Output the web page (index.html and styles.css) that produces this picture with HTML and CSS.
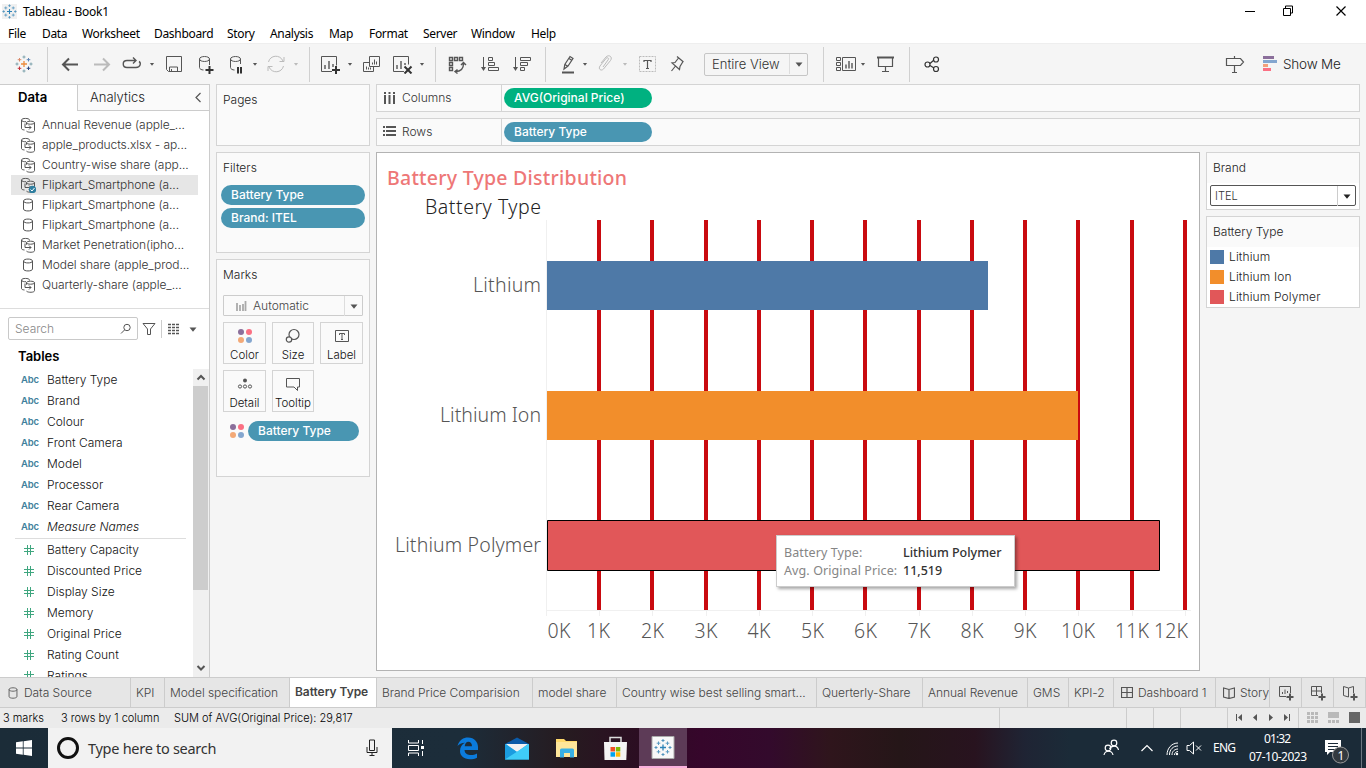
FILE: index.html
```html
<!DOCTYPE html>
<html lang="en">
<head>
<meta charset="utf-8">
<title>Tableau - Book1</title>
<link rel="stylesheet" href="styles.css">
</head>
<body>
<svg class="defs" width="0" height="0">
  <symbol id="caret" viewBox="0 0 8 20"><path d="M.5 8.500h7L4 12.800z" fill="currentColor"/></symbol>
  <symbol id="db" viewBox="0 0 16 16"><path d="M3.500 4v8c0 2.600 9 2.600 9 0V4M3.500 4c0-2.600 9-2.600 9 0s-9 2.600-9 0z" class="ln"/></symbol>
  <symbol id="dbs" viewBox="0 0 16 16"><path d="M9.500 3.500V3C9.500.9 1.500.9 1.500 3v8.500c0 .8 1 1.300 3 1.500M1.500 3c0 1.500 3 1.900 4.500 1.700M14.500 5.700v8c0 2-6.500 2-8 .5M6.500 5.700c0-2 8-2 8 0s-8 2-8 0zM5 6.500v4h6M6.500 5.700v2M9 8.500l2 2-2 2" class="ln"/></symbol>
  <symbol id="dots" viewBox="0 0 16 16"><circle cx="4" cy="4" r="3" fill="#8b6f9b"/><circle cx="12" cy="4" r="3" fill="#fb7083"/><circle cx="4" cy="12" r="3" fill="#f3a977"/><circle cx="12" cy="12" r="3" fill="#84a6cf"/></symbol>
  <symbol id="logo" viewBox="0 0 18 18"><path d="M9 6v6M6 9h6" stroke="var(--a,#2d83b7)" stroke-width="1.300"/><path d="M9 .5v3M7.500 2h3M9 14.500v3M7.500 16h3M.5 9h3M2 7.500v3M14.500 9h3M16 7.500v3" stroke="var(--b,#4f93bd)" stroke-width="1"/><path d="M4.500 3v3.500M2.700 4.700h3.600" stroke="var(--c,#5b9ac2)"/><path d="M13.500 3v3.500M11.700 4.700h3.600" stroke="var(--f,#5b9ac2)"/><path d="M4.500 11.500V15M2.700 13.300h3.600" stroke="var(--d,#5b9ac2)"/><path d="M13.500 11.500V15M11.700 13.300h3.600" stroke="var(--e,#5b9ac2)"/></symbol>
</svg>

<header class="titlebar">
  <svg class="applogo" viewBox="0 0 18 18"><use href="#logo"/></svg>
  <span class="apptitle">Tableau - Book1</span>
  <svg class="winbtns" viewBox="0 0 110 20"><path d="M2 10.500h10M49.500 8.500M47.500 7.500v7h-7v-7zM42.500 7v-2h7v7h-2" fill="none" stroke="#000"/><path d="M93.500 5.500l9 9M102.500 5.500l-9 9" stroke="#000" stroke-width="1.200"/></svg>
</header>

<nav class="menu"><span>File</span><span>Data</span><span>Worksheet</span><span>Dashboard</span><span>Story</span><span>Analysis</span><span>Map</span><span>Format</span><span>Server</span><span>Window</span><span>Help</span></nav>

<div class="toolbar">
  <svg class="ic tlogo" viewBox="0 0 20 20"><use href="#logo" x="1" y="1" width="18" height="18"/></svg>
  <i class="sep"></i>
  <svg class="ic" viewBox="0 0 20 20"><path d="M18 10.500H3M9 4.500l-6 6 6 6" class="ln w2"/></svg>
  <svg class="ic dim" viewBox="0 0 20 20"><path d="M2 10.500h15M11 4.500l6 6-6 6" class="ln w2"/></svg>
  <svg class="ic" viewBox="0 0 20 20"><path d="M14 6.500H5c-5 0-5 7 0 7h9c5 0 5-5 3-6M11 3.500l3 3-3 3" class="ln w15"/></svg>
  <svg class="ct"><use href="#caret"/></svg>
  <svg class="ic" viewBox="0 0 20 20"><path d="M2.500 2.500h15v15h-13l-2-2zM5.500 17v-4h8v4M7.500 17v-2" class="ln"/></svg>
  <svg class="ic" viewBox="0 0 20 20"><path d="M3.500 5v8.500c0 1.500 2 2.500 4 2.500M13.500 5v6M3.500 5c0-3.300 10-3.300 10 0s-10 3.300-10 0z" class="ln"/><path d="M13.500 12v8M9.500 16h8" class="ln dk w2"/></svg>
  <svg class="ic" viewBox="0 0 20 20"><path d="M3.500 5v8.500c0 1.500 2 2.500 4 2.500M13.500 5v5M3.500 5c0-3.300 10-3.300 10 0s-10 3.300-10 0z" class="ln"/><path d="M11 13v6.500M14 13v6.500" class="ln dk w2"/></svg>
  <svg class="ct"><use href="#caret"/></svg>
  <svg class="ic dim" viewBox="0 0 20 20"><path d="M2.500 8C4 1 14 0 17 7M17.500 12C16 19 6 20 3 13M18 3v4.500h-4.500M2 17v-4.500h4.500" class="ln"/></svg>
  <svg class="ct dim"><use href="#caret"/></svg>
  <i class="sep"></i>
  <svg class="ic" viewBox="0 0 20 20"><path d="M11 17.500H.5v-15h15v9" class="ln"/><path d="M4 15v-4M8 15V7M12 13v-3" class="ln w15"/><path d="M15 12v8M11 16h8" class="ln dk w2"/></svg>
  <svg class="ct"><use href="#caret"/></svg>
  <svg class="ic" viewBox="0 0 20 20"><path d="M8.500 2.500h10v10h-10zM8.500 8.500h-6v9h10v-5M11.500 10.500v-2M13.500 10.500v-5M15.500 10.500v-3M5.500 15.500v-3M7.500 15.500v-2M9.500 15.500v-2" class="ln"/></svg>
  <svg class="ic" viewBox="0 0 20 20"><path d="M11 17.500H.5v-15h15v8" class="ln"/><path d="M4 15v-4M8 15V7M12 11V9" class="ln w15"/><path d="M11.500 12.500l7 7M18.500 12.500l-7 7" class="ln dk w2"/></svg>
  <svg class="ct"><use href="#caret"/></svg>
  <i class="sep"></i>
  <svg class="ic" viewBox="0 0 20 20"><path d="M2.500 3.500h3v3h-3zM7.500 3.500h3v3h-3zM12.500 3.500h3v3h-3zM2.500 8.500h3v3h-3zM2.500 13.500h3v3h-3zM16.500 9.500c0 5-3 8-8 8M14 11l2.500-2.500L19 11M10.500 15.500l-2.500 2 2.500 2" class="ln w15"/></svg>
  <svg class="ic" viewBox="0 0 20 20"><path d="M3.500 3v13M8.500 3.500h4v3h-4zM8.500 8.500h6v3h-6zM8.500 13.500h10v3h-10z" class="ln"/><path d="M1 13h5l-2.500 4z" fill="currentColor"/></svg>
  <svg class="ic" viewBox="0 0 20 20"><path d="M3.500 3v13M8.500 3.500h10v3h-10zM8.500 8.500h7v3h-7zM8.500 13.500h4v3h-4z" class="ln"/><path d="M1 13h5l-2.500 4z" fill="currentColor"/></svg>
  <i class="sep"></i>
  <svg class="ic" viewBox="0 0 20 20"><path d="M6 15l.8-4.500L12 2.500l3 2-5 7.500zM7 10.500l3 2M11 4.500l3 2" class="ln w12"/><path d="M4 18.500h12" class="ln w2"/></svg>
  <svg class="ct"><use href="#caret"/></svg>
  <svg class="ic dim" viewBox="0 0 20 20"><path d="M8 13l5-7c1.500-2-.5-3-2-1.500L5 12c-2 3 1 5.500 3.500 3l7-8.500c2.500-3.500-1.500-6.500-4.500-3.500L6 9" class="ln"/></svg>
  <svg class="ct dim"><use href="#caret"/></svg>
  <svg class="ic" viewBox="0 0 20 20"><path d="M1.500 2.500h16v15h-16z" class="ln dim" stroke-dasharray="2 1"/><path d="M6 8V6.500h7V8M9.500 6.500v8M8 14.500h3" class="ln w12"/></svg>
  <svg class="ic" viewBox="0 0 20 20"><path d="M10 2.500l6.500 5.500M11.500 4L8 8.500l-3 .5 7.500 6.500.5-3 3-5M8.500 12l-4 5" class="ln w12"/></svg>
  <div class="viewsel"><span>Entire View</span><svg class="ct"><use href="#caret"/></svg></div>
  <i class="sep"></i>
  <svg class="ic" viewBox="0 0 20 20"><path d="M.5 3.500h4v3h-4zM.5 8.500h4v3h-4zM.5 13.500h4v3h-4zM6.500 3.500h13v13h-13z" class="ln"/><path d="M10 14.500v-4M13 14.500V7M16 14.500V9" class="ln w15"/></svg>
  <svg class="ct"><use href="#caret"/></svg>
  <svg class="ic" viewBox="0 0 20 20"><path d="M1 3.500h17" class="ln w2"/><path d="M2.500 4v8.500h14V4M9.500 12.500v5M6 17.500h7" class="ln w12"/></svg>
  <i class="sep"></i>
  <svg class="ic dk" viewBox="0 0 20 20"><path d="M8 9.500l4-3.500M8 11.500l4 2.500" class="ln w12"/><circle cx="5.500" cy="10.500" r="2.500" class="ln w12"/><circle cx="14" cy="5.500" r="2.500" class="ln w12"/><circle cx="14" cy="15" r="2.500" class="ln w12"/></svg>
  <svg class="ic" viewBox="0 0 20 20"><path d="M1.500 4.500h14l3 3.500-3 3.500h-14zM9.500 4.500V2M9.500 11.500v7M7 18.500h5" class="ln w12"/></svg>
  <div class="showme"><svg viewBox="0 0 14 16"><path d="M0 0h11v3H0z" fill="#8b6f9b"/><path d="M0 4h14v3H0z" fill="#84a6cf"/><path d="M0 8h5v3H0z" fill="#f3a07a"/><path d="M0 12h8v3H0z" fill="#fb7083"/></svg><span>Show Me</span></div>
</div>

<main class="work">
  <aside class="data">
    <div class="dtabs"><b>Data</b><div><span>Analytics</span><svg viewBox="0 0 8 12"><path d="M5.500 1L1 5.500 5.500 10" class="ln w12"/></svg></div></div>
    <ul class="sources">
      <li><svg><use href="#dbs"/></svg>Annual Revenue (apple_...</li>
      <li><svg><use href="#dbs"/></svg>apple_products.xlsx - ap...</li>
      <li><svg><use href="#dbs"/></svg>Country-wise share (app...</li>
      <li class="on"><svg viewBox="0 0 16 16"><use href="#dbs"/><circle cx="12.500" cy="12.500" r="3.700" fill="#2f7fa0"/><path d="M10.500 12.500l1.500 1.500 2.500-3" stroke="#fff" fill="none"/></svg>Flipkart_Smartphone (a...</li>
      <li><svg><use href="#db"/></svg>Flipkart_Smartphone (a...</li>
      <li><svg><use href="#db"/></svg>Flipkart_Smartphone (a...</li>
      <li><svg><use href="#dbs"/></svg>Market Penetration(ipho...</li>
      <li><svg><use href="#db"/></svg>Model share (apple_prod...</li>
      <li><svg><use href="#dbs"/></svg>Quarterly-share (apple_...</li>
    </ul>
    <div class="searchrow">
      <div class="search"><span>Search</span><svg viewBox="0 0 12 12"><circle cx="7" cy="4.500" r="3.200" class="ln"/><path d="M4.500 7L1 10.500" class="ln"/></svg></div>
      <svg class="funnel" viewBox="0 0 14 14"><path d="M1 1.500h12L8.500 7v5.500h-3V7z" class="ln"/></svg>
      <i></i>
      <svg class="lst" viewBox="0 0 14 12"><path d="M0 1.500h12M0 4.500h12M0 7.500h12M0 10.500h12" class="ln w15" stroke-dasharray="3 1"/></svg>
      <svg class="ct big"><use href="#caret"/></svg>
    </div>
    <h2>Tables</h2>
    <div class="fields">
      <div class="flist">
        <div class="f"><em>Abc</em>Battery Type</div>
        <div class="f"><em>Abc</em>Brand</div>
        <div class="f"><em>Abc</em>Colour</div>
        <div class="f"><em>Abc</em>Front Camera</div>
        <div class="f"><em>Abc</em>Model</div>
        <div class="f"><em>Abc</em>Processor</div>
        <div class="f"><em>Abc</em>Rear Camera</div>
        <div class="f it"><em>Abc</em>Measure Names</div>
        <hr>
        <div class="f n"><svg viewBox="0 0 10 10"><path d="M0 3.500h10M0 6.500h10M3.500 0v10M6.500 0v10"/></svg>Battery Capacity</div>
        <div class="f n"><svg viewBox="0 0 10 10"><path d="M0 3.500h10M0 6.500h10M3.500 0v10M6.500 0v10"/></svg>Discounted Price</div>
        <div class="f n"><svg viewBox="0 0 10 10"><path d="M0 3.500h10M0 6.500h10M3.500 0v10M6.500 0v10"/></svg>Display Size</div>
        <div class="f n"><svg viewBox="0 0 10 10"><path d="M0 3.500h10M0 6.500h10M3.500 0v10M6.500 0v10"/></svg>Memory</div>
        <div class="f n"><svg viewBox="0 0 10 10"><path d="M0 3.500h10M0 6.500h10M3.500 0v10M6.500 0v10"/></svg>Original Price</div>
        <div class="f n"><svg viewBox="0 0 10 10"><path d="M0 3.500h10M0 6.500h10M3.500 0v10M6.500 0v10"/></svg>Rating Count</div>
        <div class="f n"><svg viewBox="0 0 10 10"><path d="M0 3.500h10M0 6.500h10M3.500 0v10M6.500 0v10"/></svg>Ratings</div>
      </div>
      <div class="scroll">
        <svg viewBox="0 0 16 17"><path d="M4.500 10.500L8 7l3.500 3.500" class="ln w2"/></svg>
        <div class="thumb"></div>
        <svg viewBox="0 0 16 17"><path d="M4.500 7L8 10.500 11.500 7" class="ln w2"/></svg>
      </div>
    </div>
  </aside>

  <section class="cards">
    <div class="card pages"><h3>Pages</h3></div>
    <div class="card filters"><h3>Filters</h3><div class="pill">Battery Type</div><div class="pill">Brand: ITEL</div></div>
    <div class="card marks">
      <h3>Marks</h3>
      <div class="auto"><svg viewBox="0 0 12 12"><path d="M2 3v8M5 5v6M8 4v7M10.500 1v10" stroke="#aaa" stroke-width="1.800"/></svg><span>Automatic</span><svg class="ct"><use href="#caret"/></svg></div>
      <div class="mgrid">
        <div><svg viewBox="0 0 16 16"><use href="#dots"/></svg>Color</div>
        <div><svg viewBox="0 0 16 16"><circle cx="9" cy="6.500" r="5" class="ln w12"/><circle cx="4" cy="11.500" r="2.700" class="ln w12 bgf"/></svg>Size</div>
        <div><svg viewBox="0 0 16 16"><path d="M1.500 2.500h13v11h-13zM5.500 7V5.500h5V7M8 5.500v5.500M7 11.500h2" class="ln"/></svg>Label</div>
        <div><svg viewBox="0 0 16 16"><circle cx="8" cy="4.500" r="2" fill="#555"/><circle cx="3" cy="10.500" r="1.600" class="ln"/><circle cx="8" cy="10.500" r="1.600" class="ln"/><circle cx="13" cy="10.500" r="1.600" class="ln"/></svg>Detail</div>
        <div><svg viewBox="0 0 16 16"><path d="M1.500 2.500h13v8.500h-2v3.500L9 11H1.500z" class="ln"/></svg>Tooltip</div>
      </div>
      <div class="mpill"><svg><use href="#dots"/></svg><div class="pill">Battery Type</div></div>
    </div>
  </section>

  <section class="center">
    <div class="shelf"><div class="lab"><svg viewBox="0 0 13 12"><path d="M2 0v2M2 3v9M6.500 0v2M6.500 3v9M11 0v2M11 3v9" stroke="#555" stroke-width="2"/></svg>Columns</div><div class="pill green">AVG(Original Price)</div></div>
    <div class="shelf"><div class="lab"><svg viewBox="0 0 13 12"><path d="M0 1h2M3 1h10M0 5h2M3 5h10M0 9h2M3 9h10" stroke="#555" stroke-width="2"/></svg>Rows</div><div class="pill">Battery Type</div></div>
    <div class="lower">
      <div class="viz">
        <svg class="chart" viewBox="377 153 822 517">
          <text x="387" y="185" class="vt" textLength="240">Battery Type Distribution</text>
          <text x="425" y="214" class="vh" textLength="116">Battery Type</text>
          <path d="M599 220v390M652 220v390M706 220v390M759 220v390M812 220v390M865 220v390M919 220v390M972 220v390M1025 220v390M1078 220v390M1132 220v390M1185 220v390" stroke="#c90a10" stroke-width="4"/>
          <path d="M546.500 220v396M546 610.500h645M599.500 611v5M652.500 611v5M706.500 611v5M759.500 611v5M812.500 611v5M865.500 611v5M919.500 611v5M972.500 611v5M1025.500 611v5M1078.500 611v5M1132.500 611v5M1185.500 611v5" stroke="#f0f0f0"/>
          <path d="M547 261h441v49H547z" fill="#4e79a7"/>
          <path d="M547 391h531v49H547z" fill="#f28e2b"/>
          <path d="M547.500 520.500h612v50h-612z" fill="#e15759" stroke="#000"/>
          <g class="vl">
            <text x="473" y="292" textLength="68">Lithium</text>
            <text x="440" y="422" textLength="101">Lithium Ion</text>
            <text x="395" y="552" textLength="146">Lithium Polymer</text>
            <text x="547.500" y="638" textLength="23">0K</text>
            <text x="587" y="638" textLength="23">1K</text>
            <text x="641" y="638" textLength="23">2K</text>
            <text x="694.500" y="638" textLength="23">3K</text>
            <text x="747.500" y="638" textLength="23">4K</text>
            <text x="801" y="638" textLength="23">5K</text>
            <text x="854" y="638" textLength="23">6K</text>
            <text x="907.500" y="638" textLength="23">7K</text>
            <text x="960.500" y="638" textLength="23">8K</text>
            <text x="1013.500" y="638" textLength="23">9K</text>
            <text x="1061" y="638" textLength="34">10K</text>
            <text x="1115" y="638" textLength="34">11K</text>
            <text x="1154" y="638" textLength="34">12K</text>
          </g>
        </svg>
        <div class="tip"><span>Battery Type:</span><b>Lithium Polymer</b><span>Avg. Original Price:</span><b>11,519</b></div>
      </div>
      <div class="right">
        <div class="card"><h3>Brand</h3><div class="body"><div class="bsel"><span>ITEL</span><svg class="ct"><use href="#caret"/></svg></div></div></div>
        <div class="card"><h3>Battery Type</h3><div class="body leg"><p><i class="c1"></i>Lithium</p><p><i class="c2"></i>Lithium Ion</p><p><i class="c3"></i>Lithium Polymer</p></div></div>
      </div>
    </div>
  </section>
</main>

<div class="tabs">
  <span class="ds"><svg viewBox="0 0 16 16"><use href="#db"/></svg>Data Source</span><span>KPI</span><span>Model specification</span><span class="act">Battery Type</span><span>Brand Price Comparision</span><span>model share</span><span>Country wise best selling smart...</span><span>Querterly-Share</span><span>Annual Revenue</span><span>GMS</span><span>KPI-2</span>
  <span class="wi"><svg viewBox="0 0 12 12"><path d="M.5 .5h11v10H.5zM.5 5.500h11M6 .5v10" class="ln w12"/></svg>Dashboard 1</span>
  <span class="wi"><svg viewBox="0 0 12 12"><path d="M6 2.500L.5 1v9L6 11.500 11.500 10V1zM6 2.500v9" class="ln w12"/></svg>Story</span>
  <span class="nb"><svg viewBox="0 0 16 16"><path d="M8 11.500H1.500v-10h11V8M4.500 9V7M7 9V4.500M9.500 8V6" class="ln"/><path d="M12 8.500v7M8.500 12h7" class="ln w2"/></svg></span>
  <span class="nb"><svg viewBox="0 0 16 16"><path d="M8 10.500H1.500v-9h10V8M1.500 6h10M6.500 1.500v9" class="ln"/><path d="M12 8.500v7M8.500 12h7" class="ln w2"/></svg></span>
  <span class="nb"><svg viewBox="0 0 16 16"><path d="M6.500 3L1.500 1.500v9l5 1.500M6.500 3l5-1.500V8M6.500 3v9" class="ln"/><path d="M12 8.500v7M8.500 12h7" class="ln w2"/></svg></span>
</div>

<div class="status">
  <span>3 marks</span><span>3 rows by 1 column</span><span>SUM of AVG(Original Price): 29,817</span>
  <i></i><i></i><i></i><i></i>
  <div class="navs"><svg viewBox="0 0 70 20"><path d="M8.500 6v7M61.500 6v7" stroke="#555"/><path d="M14 6v7l-4-3.500zM29 6v7l-4-3.500zM41 6v7l4-3.500zM56 6v7l4-3.500z" fill="#555"/></svg></div>
  <div class="views"><svg viewBox="0 0 68 20"><path d="M8 5.500h11M8 9.500h11M8 13.500h11" stroke="#b9b9b9" stroke-width="3" stroke-dasharray="3 1"/><path d="M29 4h11v6H29z" fill="#b9b9b9"/><path d="M29 13.500h11" stroke="#b9b9b9" stroke-width="3" stroke-dasharray="3 1"/><path d="M50 4h11v11H50z" fill="#666"/></svg></div>
</div>

<footer class="taskbar">
  <div class="start"><svg viewBox="0 0 16 16"><path d="M0 2.300L6.800 1.300V7.600H0zM7.600 1.200L16 0v7.600H7.600zM0 8.400h6.800v6.300L0 13.700zM7.600 8.400H16V16l-8.400-1.200z" fill="#fff"/></svg></div>
  <div class="tsearch"><i></i><span>Type here to search</span><svg viewBox="0 0 12 18"><path d="M3.500 1h5v10.500h-5zM1 8v5.500h10V8M6 13.500V17M3.500 16.500h5" fill="none" stroke="#222"/></svg></div>
  <div class="app tv"><svg viewBox="0 0 24 24"><path d="M4.500 4v3h10V4M4.500 20v-3h10v3M4.500 9.500h10v5h-10zM18.500 4v4M18.500 15v5" fill="none" stroke="#fff"/><path d="M17 10h3v3h-3z" fill="#fff"/></svg></div>
  <div class="app"><svg viewBox="0 0 24 24"><path d="M1.500 10C3 4 7.500 1.500 12 1.500c6.500 0 10 4.800 10 9.500v3H8.500c.2 4 3.500 5 6.500 5 2.200 0 4-.5 6-1.600v4.300c-2 1-4.300 1.500-7 1.500C7.500 23.200 4 19.500 4 15c0-4 2-6.800 5-8.200C5.500 7 3 8 1.500 10zm7.200.2H16c0-3-1.500-4.500-3.600-4.500S9 7.500 8.700 10.200z" fill="#0b7bdc"/></svg></div>
  <div class="app"><svg viewBox="0 0 24 24"><path d="M0 8l12-6.500L24 8v3H0z" fill="#0b5ba8"/><path d="M0 8h24v15.500H0z" fill="#23aee8"/><path d="M1 8h22L12 16z" fill="#f2f2f2"/><path d="M0 8l12 8L0 23.500z" fill="#1b9cdf"/><path d="M24 8v15.500H0L24 8z" fill="#3fccf7"/></svg></div>
  <div class="app"><svg viewBox="0 0 24 24"><path d="M2 3h8l2 2h11v16H2z" fill="#ffd96b"/><path d="M2 6h21v15H2z" fill="#fee69a"/><path d="M6 21.500V14q0-1.500 1.500-1.500h11Q20 12.500 20 14v7.500h-4V17h-6v4.500z" fill="#38b0e4"/></svg></div>
  <div class="app"><svg viewBox="0 0 24 24"><path d="M7 6V1.500h11V6" fill="none" stroke="#ddd" stroke-width="1.500"/><path d="M1 6h23l-.7 18H1.500z" fill="#f4f4f4"/><path d="M7.500 11h4.500v4.500H7.500z" fill="#f04e24"/><path d="M12.800 11h4.500v4.500h-4.500z" fill="#7fba00"/><path d="M7.500 16.200h4.500v4.500H7.500z" fill="#00a3ee"/><path d="M12.800 16.200h4.500v4.500h-4.500z" fill="#ffb900"/></svg></div>
  <div class="app cur"><svg viewBox="0 0 24 24"><path d="M1 1.500h22v22H1z" fill="#f8f8f8" stroke="#aaa"/><use href="#logo" x="3" y="3.500" width="18" height="18"/></svg></div>
  <div class="tray">
    <svg class="tri" viewBox="0 0 266 40"><g fill="none" stroke="#fff"><g stroke-width="1.200"><circle cx="14" cy="15" r="2.800"/><path d="M9.500 21c2-4 8-4 9 1"/><circle cx="8" cy="20" r="2.800"/><path d="M4 27c1-5 8-5 9 0M41.500 23l5.500-5.500L52.500 23"/></g><path d="M67 27c0-7 5-12 11-12M69.500 27c0-6 4-9 8.500-9M72 27c0-4 3-6 6-6M74.500 27c0-2 1.500-3.500 3.500-3.500M87 17.500h2.500l4-3.500v12l-4-3.500H87zM96 17.500l5 5M101 17.500l-5 5"/></g><circle cx="77" cy="26" r="1.200" fill="#fff"/><path d="M225 12h16v12h-11l-3 3v-3h-2z" fill="#fff"/><path d="M228 15.500h10M228 18.500h10M228 21.500h7" stroke="#1b2a38"/><circle cx="240.500" cy="27" r="8" fill="#333a40" stroke="#999"/><path d="M261.500 0v40" stroke="#6b7680"/><text x="113" y="24" textLength="23">ENG</text><text x="164" y="15" textLength="27">01:32</text><text x="149" y="33" textLength="58">07-10-2023</text><text x="237.500" y="31.500">1</text></svg>
  </div>
</footer>
</body>
</html>
```
FILE: styles.css
```css
* { box-sizing: border-box; margin: 0; padding: 0; }
body { width: 1366px; height: 768px; overflow: hidden; background: #f5f5f5; color: #333; font: 300 12px/20px Inter, "Noto Sans", sans-serif; white-space: nowrap; display: flex; flex-direction: column; }
svg { display: block; color: #555; flex: none; }
.defs { position: absolute; }
.ln { fill: none; stroke: currentColor; stroke-width: 1; }
.w12 { stroke-width: 1.200; }
.w15 { stroke-width: 1.400; }
.w2 { stroke-width: 2; }
.dk { color: #333; }
.dim { color: #bbb; }
.bgf { fill: #fafafa; }
.ct { width: 8px; height: 20px; }

.titlebar { height: 24px; background: #fff; display: flex; align-items: center; padding: 0 13px 2px 2px; font: 400 12px "Noto Sans", sans-serif; color: #000; }
.applogo { width: 15px; height: 15px; background: #f0f0f0; }
.apptitle { margin-left: 6px; letter-spacing: -.25px; flex: 1; }
.winbtns { width: 110px; height: 20px; }
.menu { height: 19px; background: #fff; display: grid; grid-template-columns: 34px 40px 72px 73px 43px 59px 40px 54px 48px 60px auto; padding-left: 8px; font: 400 12px/20px "Noto Sans", sans-serif; letter-spacing: -.32px; color: #000; }

.toolbar { height: 41px; border-top: 1px solid #eee; display: grid; align-items: center; padding-left: 14px; grid-template-columns: 33px 13px 32px 30px 27px 15px 32px 31px 25px 14px 27px 16px 12px 26px 14px 32px 26px 16px 12px 33px 32px 33px 13px 24px 13px 27px 16px 29px 37px 119px 13px 24px 16px 33px 13px 303px 38px auto; }
.ic { width: 20px; height: 20px; }
.toolbar .ct { height: 12px; width: 6px; }
.sep { width: 1px; height: 35px; background: #d0d0d0; }
.tlogo { --a: #eb8a3c; --b: #7fa3ad; --c: #d98a6b; --d: #c3343c; --e: #28447f; --f: #5f86b5; }
.viewsel { width: 104px; height: 23px; border: 1px solid #c6c6c6; border-radius: 2px; display: flex; font-size: 13px; align-items: center; padding-left: 7px; color: #333; }
.viewsel span { width: 78px; letter-spacing: 0; border-right: 1px solid #ddd; }
.toolbar .viewsel .ct { margin-left: 5px; width: 8px; height: 20px; }
.showme { display: flex; align-items: center; gap: 6px; font-size: 13.500px; font-weight: 350; letter-spacing: -.2px; color: #222; }
.showme svg { width: 14px; height: 16px; }

.work { height: 593px; display: flex; }
.data { width: 210px; background: #fff; border-right: 1px solid #ccc; border-top: 1px solid #ccc; display: flex; flex-direction: column; }
.dtabs { height: 26px; display: grid; grid-template-columns: 77px auto; font-size: 13px; line-height: 25px; color: #222; }
.dtabs b { font-size: 13.200px; color: #000; padding-left: 18px; font-weight: 600; }
.dtabs div { background: #fafafa; border-left: 1px solid #ccc; border-bottom: 1px solid #ccc; display: flex; justify-content: space-between; align-items: center; padding: 0 6px 0 12px; }
.dtabs svg { width: 8px; height: 12px; }
.sources { list-style: none; padding: 4px 11px 0; height: 198px; border-bottom: 1px solid #ddd; color: #333; letter-spacing: -.07px; }
.sources li { height: 20px; display: flex; align-items: center; gap: 6px; padding-left: 9px; }
.sources .on { background: #e6e6e6; }
.sources svg { width: 16px; height: 16px; }
.searchrow { height: 38px; display: flex; align-items: center; padding: 1px 0 0 8px; }
.search { width: 130px; height: 23px; border: 1px solid #c9c9c9; border-radius: 2px; color: #888; display: flex; align-items: center; justify-content: space-between; padding: 0 5px 0 6px; }
.search svg { width: 12px; height: 12px; }
.funnel { width: 14px; height: 14px; margin-left: 4px; }
.searchrow i { width: 1px; height: 18px; background: #ccc; margin: 0 6px 0 5px; }
.lst { width: 14px; height: 12px; }
.searchrow .big { margin-left: 7px; }
h2 { font-size: 13px; font-weight: 600; color: #000; padding-left: 18px; height: 22px; line-height: 19px; }
.fields { display: flex; flex: 1; min-height: 0; overflow: hidden; color: #111; }
.flist { flex: 1; }
.f { height: 21px; line-height: 20px; display: flex; align-items: center; }
.f em { font: 600 9.500px/20px Inter, sans-serif; color: #3f7f9c; width: 26px; margin-left: 21px; padding-top: 1px; letter-spacing: -.2px; }
.it { font-style: italic; }
.f svg { width: 10px; height: 10px; margin: 0 13px 0 24px; stroke: #3fa67f; }
hr { border: 0; height: 1px; background: #ddd; margin: 1px 7px 0 15px; }
.scroll { width: 16px; background: #f0f0f0; display: flex; flex-direction: column; }
.scroll svg { width: 16px; height: 17px; }
.thumb { height: 204px; width: 15px; background: #cdcdcd; margin-bottom: 69px; }

.cards { width: 154px; margin-left: 6px; display: flex; flex-direction: column; gap: 6px; }
.card { background: #fafafa; border: 1px solid #d4d4d4; }
h3 { font-size: 12px; font-weight: 300; color: #222; padding: 5px 0 0 6px; height: 30px; }
.pages { height: 62px; }
.filters { height: 101px; padding-left: 4px; }
.filters h3 { padding-left: 2px; height: 32px; }
.pill { height: 20px; border-radius: 10px; background: #4996b2; color: #fff; font-weight: 500; padding-left: 10px; line-height: 20px; }
.filters .pill { width: 144px; margin-bottom: 3px; }
.marks { height: 218px; padding: 0 6px; }
.marks h3 { padding-left: 0; height: 35px; }
.auto { height: 21px; border: 1px solid #ccc; border-radius: 1px; display: flex; align-items: center; color: #444; padding-left: 11px; }
.auto svg:first-child { width: 12px; height: 12px; }
.auto span { margin-left: 6px; width: 92px; border-right: 1px solid #ddd; }
.auto .ct { margin-left: 5px; }
.mgrid { display: grid; grid-template-columns: 43px 42px 43px; column-gap: 6px; row-gap: 6px; margin-top: 6px; }
.mgrid div { height: 42px; border: 1px solid #d4d4d4; display: flex; flex-direction: column; align-items: center; font-size: 11.500px; line-height: 18px; padding-top: 5px; color: #111; }
.mgrid svg { width: 16px; height: 16px; margin-bottom: 2px; }
.mpill { display: flex; align-items: center; gap: 3px; margin: 9px 0 0 6px; }
.mpill svg { width: 16px; height: 16px; }
.mpill .pill { width: 111px; }

.center { width: 984px; margin-left: 6px; display: flex; flex-direction: column; gap: 6px; }
.shelf { height: 28px; background: #fafafa; border: 1px solid #d4d4d4; display: flex; align-items: center; }
.lab { width: 125px; height: 26px; border-right: 1px solid #d4d4d4; display: flex; align-items: center; gap: 6px; padding-left: 6px; color: #333; }
.lab svg { width: 13px; height: 12px; }
.shelf .pill { width: 148px; margin-left: 2px; }
.green { background: #00b180; }
.lower { display: flex; gap: 6px; height: 519px; }
.viz { width: 824px; background: #fff; border: 1px solid #b3b3b3; position: relative; }
.chart { width: 822px; height: 517px; font-family: "Noto Sans", sans-serif; }
.vt { font-size: 19.500px; font-weight: 500; fill: #ee7777; }
.vh { font-size: 19.500px; fill: #222; font-weight: 300; }
.vl { font-size: 19.500px; fill: #555; font-weight: 300; }
.tip { position: absolute; left: 399px; top: 382px; width: 239px; height: 52px; background: #fff; border: 1px solid #ccc; box-shadow: 2px 2px 3px rgba(0,0,0,.35); display: grid; grid-template-columns: 119px auto; grid-auto-rows: 18px; line-height: 18px; padding: 8px 0 0 7px; font-family: "Noto Sans", sans-serif; font-size: 12.500px; font-weight: 400; letter-spacing: .1px; color: #858585; }
.tip b { font-weight: 500; color: #333; letter-spacing: 0; }
.right { width: 154px; display: flex; flex-direction: column; gap: 6px; }
.body { background: #fff; height: 26px; padding: 2px 3px; }
.bsel { height: 21px; border: 1px solid #555; border-radius: 2px; display: flex; align-items: center; padding-left: 4px; font-size: 11px; }
.bsel span { width: 123px; border-right: 1px solid #ccc; }
.bsel .ct { color: #222; margin-left: 5px; }
.leg { height: 60px; padding: 0 3px; }
.leg p { display: flex; align-items: center; gap: 5px; height: 20px; color: #222; letter-spacing: .12px; }
.leg i { width: 14px; height: 14px; }
.c1 { background: #4e79a7; } .c2 { background: #f28e2b; } .c3 { background: #e15759; }

.tabs { height: 31px; background: #e6e6e6; border-top: 1px solid #ccc; border-bottom: 1px solid #ccc; display: grid; grid-template-columns: 131px 34px 125px 87px 156px 84px 200px 106px 105px 41px 45px 102px 54px 32px 32px 32px; color: #444; line-height: 29px; letter-spacing: -.05px; }
.tabs span { border-right: 1px solid #ccc; padding-left: 5px; overflow: hidden; }
.tabs .ds { display: flex; align-items: center; gap: 3px; }
.ds svg { width: 16px; height: 14px; }
.tabs .act { background: #fff; font-weight: 600; color: #444; line-height: 28px; }
.wi, .nb { display: flex; align-items: center; gap: 4px; }
.tabs .wi { padding-left: 7px; gap: 5px; }
.wi svg { width: 12px; height: 12px; }
.nb svg { width: 16px; height: 16px; }
.tabs .nb { padding-left: 8px; }
.status { height: 20px; background: #ebebeb; display: grid; grid-template-columns: 58px 113px 825px 127px 27px 27px 47px 71px 68px; padding-left: 3px; font-size: 11px; color: #000; }
.status i { border-left: 1px solid #ccc; }
.navs, .views { border-left: 1px solid #ccc; }
.navs svg { width: 70px; height: 20px; }
.views svg { width: 68px; height: 20px; }

.taskbar { height: 40px; display: flex; font-family: "Noto Sans", sans-serif; font-weight: 400; background: linear-gradient(90deg, #1b2c38 0, #1c2d3a 460px, #261b20 565px, #2c0d22 640px, #36062b 700px, #330a2c 770px, #2f151c 830px, #251618 900px, #28131f 975px, #1f2434 1025px, #1b2b38 1070px, #1b2b38 1366px); }
.start { width: 48px; display: grid; place-items: center; }
.start svg { width: 16px; height: 16px; }
.tsearch { width: 344px; background: #f2f2f2; display: flex; align-items: center; padding-left: 9px; font-size: 14.500px; color: #333; padding-bottom: 1px; }
.tsearch i { width: 22px; height: 22px; border: 3px solid #111; border-radius: 50%; }
.tsearch span { margin-left: 9px; width: 278px; letter-spacing: -.28px; }
.tsearch svg { width: 12px; height: 18px; }
.app { width: 49px; display: grid; place-items: center; }
.app svg { width: 24px; height: 24px; }
.tv { width: 51px; padding-right: 3px; }
.cur { width: 48px; background: #5d3b57; border-bottom: 2px solid #f9b0dc; margin-left: auto; }
.cur { margin-left: 0; }
.tray { margin-left: auto; width: 266px; }
.tri { width: 266px; height: 40px; }
.tri text { fill: #fff; font-size: 12px; }
```
